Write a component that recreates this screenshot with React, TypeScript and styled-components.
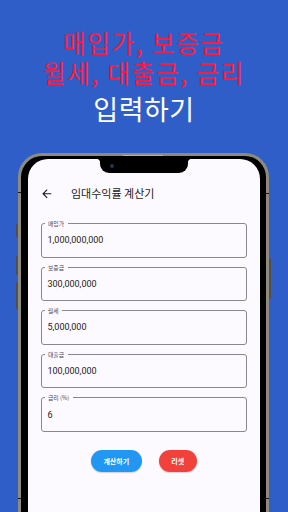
import React from "react";
import styled, { createGlobalStyle } from "styled-components";

const GlobalStyle = createGlobalStyle`
  html, body {
    margin: 0;
    padding: 0;
    width: 288px;
    height: 512px;
    overflow: hidden;
    background: #2f5ec8;
  }
  * { box-sizing: border-box; }
`;

const Page = styled.div`
  width: 288px;
  height: 512px;
  display: flex;
  flex-direction: column;
  align-items: flex-start;
  overflow: hidden;
  font-family: Roboto, "Noto Sans CJK KR", sans-serif;
`;

const Headline = styled.div`
  width: 100%;
  padding-top: 27.9px;
  display: flex;
  flex-direction: column;
  align-items: center;
  font-family: "Noto Sans CJK KR", "Noto Sans", sans-serif;
`;

const Line = styled.div<{ $color: string; $size: number; $lh: number; $ls: number }>`
  color: ${(p) => p.$color};
  font-size: ${(p) => p.$size}px;
  line-height: ${(p) => p.$lh}px;
  letter-spacing: ${(p) => p.$ls}px;
  font-weight: 400;
  text-align: center;
  white-space: nowrap;
`;

const Phone = styled.div`
  position: relative;
  margin-top: 23.3px;
  margin-left: 17.5px;
  width: 251.5px;
  height: 370px;
  flex-shrink: 0;
  display: flex;
  flex-direction: column;
  background: #000;
  border: 3px solid #8f8a7c;
  border-bottom: none;
  border-radius: 24px 24px 0 0;
  padding: 3px 6px 0 7px;
`;

const SideButton = styled.div<{ $side: "left" | "right"; $top: number; $h: number }>`
  position: absolute;
  ${(p) => p.$side}: -4.5px;
  top: ${(p) => p.$top}px;
  width: 2px;
  height: ${(p) => p.$h}px;
  background: #4f4f52;
  border-radius: 1px;
`;

const AntennaMark = styled.div<{ $side: "left" | "right"; $top: number }>`
  position: absolute;
  ${(p) => p.$side}: -3px;
  top: ${(p) => p.$top}px;
  width: 3px;
  height: 1.5px;
  background: #1a1a1a;
`;

const Speaker = styled.div`
  position: absolute;
  top: -1px;
  left: 102px;
  width: 40px;
  height: 1px;
  background: #b8b4a6;
`;

const Screen = styled.div`
  position: relative;
  flex: 1;
  background: #fcfaff;
  border-radius: 20px 20px 0 0;
  display: flex;
  flex-direction: column;
  padding: 0 13px;
`;

const Notch = styled.div`
  position: absolute;
  top: 0;
  left: 72px;
  width: 88px;
  height: 14px;
  background: #000;
  border-radius: 0 0 9px 9px;
  &::before, &::after {
    content: "";
    position: absolute;
    top: 0;
    width: 4px;
    height: 4px;
  }
  &::before {
    left: -4px;
    background: radial-gradient(circle at 0 100%, transparent 4px, #000 4.5px);
  }
  &::after {
    right: -4px;
    background: radial-gradient(circle at 100% 100%, transparent 4px, #000 4.5px);
  }
`;

const Camera = styled.div`
  position: absolute;
  left: 10.5px;
  top: 4.5px;
  width: 4px;
  height: 4px;
  border-radius: 50%;
  background: #24364f;
`;

const AppBar = styled.div`
  margin-top: 25px;
  height: 18px;
  display: flex;
  align-items: center;
  color: #1d1b20;
`;

const BackIcon = styled.svg`
  width: 13.5px;
  height: 13.5px;
  margin-left: -0.5px;
  fill: #1d1b20;
`;

const Title = styled.div`
  margin-left: 17.5px;
  font-family: "Noto Sans CJK KR", Roboto, sans-serif;
  font-size: 11px;
  color: #1d1b20;
  white-space: nowrap;
`;

const Form = styled.div`
  margin-top: 20.5px;
  display: flex;
  flex-direction: column;
  gap: 9px;
`;

const Field = styled.div`
  position: relative;
  height: 34.6px;
  border: 1px solid #8a8690;
  border-radius: 3px;
  display: flex;
  align-items: center;
  padding-left: 6px;
`;

const FieldLabel = styled.span`
  position: absolute;
  left: 3px;
  top: -4px;
  padding: 0 3.5px;
  background: #fcfaff;
  font-family: "Noto Sans CJK KR", Roboto, sans-serif;
  font-size: 5.8px;
  line-height: 7px;
  color: #49454f;
  white-space: nowrap;
`;

const FieldValue = styled.span`
  font-family: Roboto, "Noto Sans CJK KR", sans-serif;
  font-size: 9px;
  color: #1d1b20;
`;

const ButtonRow = styled.div`
  margin-top: 17.7px;
  display: flex;
  justify-content: center;
  gap: 17px;
`;

const ActionButton = styled.button<{ $bg: string }>`
  height: 22px;
  padding: 0 12.5px;
  border: none;
  border-radius: 11px;
  background: ${(p) => p.$bg};
  color: #fff;
  font-family: "Noto Sans CJK KR", Roboto, sans-serif;
  font-weight: 700;
  font-size: 7px;
  box-shadow: 0 1px 1.5px rgba(0, 0, 0, 0.18);
  white-space: nowrap;
`;

const fields = [
  { label: "매입가", value: "1,000,000,000" },
  { label: "보증금", value: "300,000,000" },
  { label: "월세", value: "5,000,000" },
  { label: "대출금", value: "100,000,000" },
  { label: "금리 (%)", value: "6" },
];

export default function App() {
  return (
    <>
      <GlobalStyle />
      <Page>
        <Headline>
          <Line $color="#ff1a3d" $size={24.5} $lh={30} $ls={1.8}>
            매입가, 보증금
            <br />
            월세, 대출금, 금리
          </Line>
          <Line $color="#ffffff" $size={27} $lh={42.3} $ls={0.5}>입력하기</Line>
        </Headline>
        <Phone>
          <SideButton $side="left" $top={67.5} $h={13} />
          <SideButton $side="left" $top={99.5} $h={19} />
          <SideButton $side="left" $top={125.5} $h={27} />
          <SideButton $side="right" $top={101.5} $h={41} />
          <AntennaMark $side="left" $top={35.5} />
          <AntennaMark $side="right" $top={36.5} />
          <AntennaMark $side="left" $top={341.5} />
          <AntennaMark $side="right" $top={341.5} />
          <Speaker />
          <Screen>
            <Notch>
              <Camera />
            </Notch>
            <AppBar>
              <BackIcon viewBox="0 0 24 24">
                <path d="M20 11H7.83l5.59-5.59L12 4l-8 8 8 8 1.41-1.41L7.83 13H20v-2z" />
              </BackIcon>
              <Title>임대수익률 계산기</Title>
            </AppBar>
            <Form>
              {fields.map((f) => (
                <Field key={f.label}>
                  <FieldLabel>{f.label}</FieldLabel>
                  <FieldValue>{f.value}</FieldValue>
                </Field>
              ))}
            </Form>
            <ButtonRow>
              <ActionButton $bg="#2196f3">계산하기</ActionButton>
              <ActionButton $bg="#f2403a">리셋</ActionButton>
            </ButtonRow>
          </Screen>
        </Phone>
      </Page>
    </>
  );
}
